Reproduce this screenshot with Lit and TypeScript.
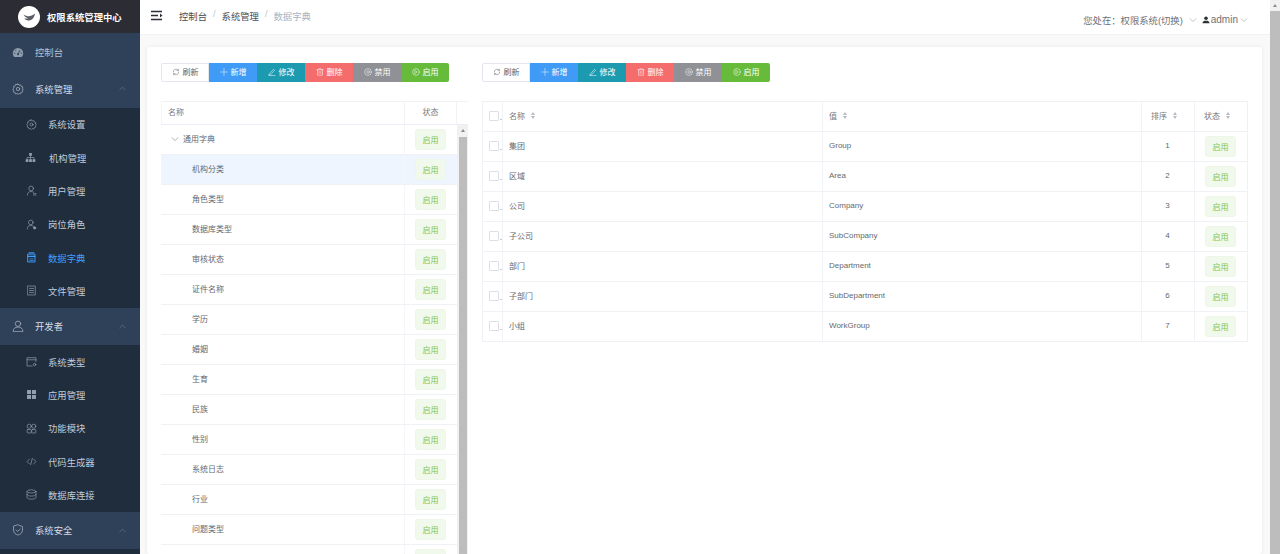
import { LitElement, html, css, svg } from "lit";
import { customElement } from "lit/decorators.js";

const ic = (body: unknown, size = 11) => html`<svg class="ic" width=${size} height=${size} viewBox="0 0 16 16" fill="none" stroke="currentColor" stroke-width="1" stroke-linecap="round" stroke-linejoin="round">${body}</svg>`;

const gear = svg`<circle cx="8" cy="8" r="2.2"/><path d="M8 1.2l1.4 1.7 2.1-.5.7 2.1 2.1.7-.5 2.1L15 8l-1.200 1.600.5 2.100-2.100.7-.7 2.100-2.100-.5L8 15.200l-1.400-1.200-2.100.5-.7-2.100-2.100-.7.5-2.100L1 8l1.600-1.400-.5-2.100 2.100-.7.7-2.100 2.100.5z"/>`;
const icons: Record<string, unknown> = {
  dash: svg`<path d="M3 14.500A7 7 0 1 1 13 14.500z" fill="currentColor" stroke="none"/><path d="M8 10.500l2.500-4.500" stroke="#304156" stroke-width="1.200"/><circle cx="8" cy="11" r="1.300" fill="#304156" stroke="none"/><path d="M2.800 9.500h1.200M12 9.500h1.200M4.500 5.500l.8.8" stroke="#304156"/>`,
  gear,
  org: svg`<g fill="currentColor" stroke="none"><rect x="6" y="1.500" width="4" height="4"/><rect x="1" y="10.500" width="4" height="4"/><rect x="6" y="10.500" width="4" height="4"/><rect x="11" y="10.500" width="4" height="4"/></g><path d="M8 5.500v5M3 10.500V8h10v2.500"/>`,
  user: svg`<circle cx="7.500" cy="5" r="3.400"/><path d="M2 14.500c0-3.400 2.400-5 5.500-5 1.400 0 2.400.3 3.400 1"/><path d="M11 12.500h3.500M11 14.500h3.500"/>`,
  role: svg`<circle cx="7" cy="5" r="3.400"/><path d="M1.800 14.500c0-3.200 2.200-5 5.200-5s4.200 1 5 3"/><circle cx="12.500" cy="13" r="1.600" fill="currentColor"/>`,
  dict: svg`<rect x="3" y="3" width="10" height="11.500" stroke-width="1.400"/><path d="M4.500 1.200h7" stroke-width="1.400"/><path d="M3 6.500h10" stroke-width="1.800"/><path d="M5.500 10h5M5.500 12.300h5"/>`,
  file: svg`<rect x="2.500" y="1.500" width="11" height="13"/><path d="M5 5h6M5 8h6M5 11h6"/>`,
  dev: svg`<circle cx="8" cy="5" r="3.600"/><path d="M1.500 15c0-3.600 2.600-5.600 6.500-5.600s6.500 2 6.500 5.600z"/>`,
  sys: svg`<path d="M14.500 8V2.500h-13v12H9M1.500 5.500h13"/><circle cx="12.500" cy="12.500" r="1.800"/>`,
  app: svg`<g fill="currentColor" stroke="none"><rect x="1.500" y="1.500" width="5.800" height="5.800"/><rect x="8.700" y="1.500" width="5.800" height="5.800"/><rect x="1.500" y="8.700" width="5.800" height="5.800"/><rect x="8.700" y="8.700" width="5.800" height="5.800"/></g>`,
  mod: svg`<circle cx="4.700" cy="4.700" r="3"/><circle cx="11.300" cy="4.700" r="3"/><rect x="1.700" y="9.500" width="6" height="5" rx="1"/><rect x="8.300" y="9.500" width="6" height="5" rx="1"/>`,
  code: svg`<path d="M5 4.500L1.500 8 5 11.500M11 4.500L14.500 8 11 11.500M9.200 3.500L6.800 12.500"/>`,
  db: svg`<ellipse cx="8" cy="3.500" rx="6.500" ry="2.300"/><path d="M1.500 3.500v9c0 1.300 2.900 2.300 6.500 2.300s6.500-1 6.500-2.300v-9M1.500 8c0 1.300 2.900 2.300 6.500 2.300s6.500-1 6.500-2.300"/>`,
  shield: svg`<path d="M8 1.200l6 2.200v4.800c0 3.400-2.600 5.600-6 6.600-3.400-1-6-3.200-6-6.600V3.400z"/><path d="M5.300 7.800L7.500 10l3.400-3.400"/>`,
  refresh: svg`<path d="M13.500 8A5.500 5.500 0 0 1 3.600 11.300M2.500 8a5.500 5.500 0 0 1 9.900-3.300"/><path d="M12.800 2.200v2.600h-2.600M3.200 13.800v-2.600h2.600"/>`,
  plus: svg`<path d="M8 1v14M1 8h14"/>`,
  edit: svg`<path d="M3 11.500L11 2.500l2.200 2-8 8.800-3 .7zM2 15h12"/>`,
  trash: svg`<path d="M1.500 3.500h13M5.500 3.500v-2h5v2M3 3.500v11h10v-11M6.300 6.500v5M9.700 6.500v5"/>`,
  ban: svg`<circle cx="8" cy="8" r="6.800"/><circle cx="8" cy="8" r="2.600"/>`,
  play: svg`<circle cx="8" cy="8" r="6.800"/><path d="M6.300 5l4.400 3-4.400 3z"/>`,
  chevUp: svg`<path d="M3 10.500L8 5.500l5 5"/>`,
  chevDown: svg`<path d="M2 5.500L8 11l6-5.500"/>`,
  person: svg`<circle cx="8" cy="4.500" r="3.600" fill="currentColor" stroke="none"/><path d="M1 14.500c0-3.800 3.200-5 7-5s7 1.200 7 5z" fill="currentColor" stroke="none"/>`,
};

const groups = [
  { t: "控制台", i: "dash", dim: true, subs: [] as { t: string; i: string; on?: boolean; wide?: boolean }[], leaf: true },
  { t: "系统管理", i: "gear", dim: false, leaf: false, subs: [
    { t: "系统设置", i: "gear" }, { t: "机构管理", i: "org", wide: true }, { t: "用户管理", i: "user" },
    { t: "岗位角色", i: "role" }, { t: "数据字典", i: "dict", on: true }, { t: "文件管理", i: "file" } ] },
  { t: "开发者", i: "dev", dim: false, leaf: false, subs: [
    { t: "系统类型", i: "sys" }, { t: "应用管理", i: "app" }, { t: "功能模块", i: "mod" },
    { t: "代码生成器", i: "code" }, { t: "数据库连接", i: "db" } ] },
  { t: "系统安全", i: "shield", dim: false, leaf: false, subs: [] },
];

const tools = [
  { t: "刷新", i: "refresh", c: "plain" }, { t: "新增", i: "plus", c: "blue" }, { t: "修改", i: "edit", c: "teal" },
  { t: "删除", i: "trash", c: "red" }, { t: "禁用", i: "ban", c: "gray" }, { t: "启用", i: "play", c: "green" },
];

const tree = ["机构分类", "角色类型", "数据库类型", "审核状态", "证件名称", "学历", "婚姻", "生育", "民族", "性别", "系统日志", "行业", "问题类型", ""];
const items = [["集团", "Group"], ["区域", "Area"], ["公司", "Company"], ["子公司", "SubCompany"], ["部门", "Department"], ["子部门", "SubDepartment"], ["小组", "WorkGroup"]];

@customElement("app-root")
export class AppRoot extends LitElement {
  static styles = css`
    :host { display: flex; width: 1280px; height: 554px; overflow: hidden; background: #fff; color: #606266;
      font-family: "Liberation Sans", "Noto Sans CJK SC", sans-serif; font-size: 8px; }
    * { box-sizing: border-box; }
    .ic { flex: none; display: block; }

    aside { width: 140px; flex: none; background: #1f2d3d; color: #bfcbd9; font-size: 9.33px; overflow: hidden; }
    aside .ic { opacity: .72; }
    .logo { height: 33px; background: #2b2c34; display: flex; align-items: center; gap: 7px; padding-left: 18px; color: #fff; font-weight: 700; }
    .logo svg { flex: none; }
    .group { height: 37.33px; background: #2f4159; display: flex; align-items: center; padding: 0 13px 0 12px; gap: 11px; color: #d5dde6; }
    .group.dim { color: #b4c0cd; }
    .group .arrow { margin-left: auto; opacity: .55; }
    .sub { height: 33.33px; display: flex; align-items: center; padding-left: 26px; gap: 11px; }
    .sub.wide { padding-left: 25px; gap: 13px; }
    .sub.on { color: #409eff; }
    .sub.on .ic { opacity: 1; }

    main { flex: 1; min-width: 0; display: flex; flex-direction: column; }
    header { height: 35px; flex: none; display: flex; align-items: center; padding: 0 22px 3px 11px; border-bottom: 1px solid #f2f2f2; font-size: 9.33px; }
    .burger { color: #2b2f3a; margin-right: 16px; }
    .crumb { color: #4a4d52; display: flex; gap: 6px; }
    .crumb .sep { color: #c0c4cc; }
    .crumb .last { color: #a6b4c6; }
    .right { margin-left: auto; padding-top: 8px; display: flex; align-items: center; color: #6f7276; }
    .right .chev { margin: 0 5px 0 6px; color: #8a8d92; }
    .right .chev.end { margin: 0 0 0 2px; }
    .right .who { color: #303133; margin-right: 1px; }
    .right .name { font-size: 10px; }

    .page { flex: 1; min-height: 0; background: #f9f9f9; padding: 12px 8px 0 7px; }
    .card { height: 100%; background: #fff; border-radius: 3px; box-shadow: 0 0 4px rgba(0,0,0,.07); padding: 16px 14px 0;
      display: grid; grid-template-columns: 307px 766px; gap: 14px; overflow: hidden; }
    .panel { min-width: 0; }
    .toolbar { display: flex; height: 19px; margin-bottom: 19px; }
    .btn { width: 48px; height: 19px; padding-bottom: 2px; display: flex; align-items: center; justify-content: center; gap: 3px; color: #fff; }
    .btn:first-child { border-radius: 2px 0 0 2px; }
    .btn:last-child { border-radius: 0 2px 2px 0; }
    .plain { background: #fff; color: #606266; border: 1px solid #e4e7ed; }
    .blue { background: #3f9bf5; }
    .teal { background: #1c9bb0; }
    .red { background: #f56c6c; }
    .gray { background: #8f9196; }
    .green { background: #67bb3a; }

    .tag { width: 31px; height: 21px; display: flex; align-items: center; justify-content: center; background: #f0f9eb;
      border: 1px solid #eef7e7; border-radius: 3px; color: #7fc65a; }

    .ltable { border-top: 1px solid #f0f2f6; height: 100%; }
    .lhead { display: grid; grid-template-columns: 242px 53px 11px; height: 23px; border-bottom: 1px solid #ebeef5; border-left: 1px solid #f4f5f8; }
    .lhead > div { display: flex; align-items: center; padding-bottom: 3px; }
    .lhead .name { padding-left: 6px; color: #77797e; }
    .lhead .st { justify-content: center; border-left: 1px solid #f0f2f6; border-right: 1px solid #f0f2f6; color: #77797e; }
    .lbody { display: flex; height: 440px; overflow: hidden; }
    .lrows { width: 296px; flex: none; }
    .lrow { display: grid; grid-template-columns: 243px 53px; height: 30px; border-bottom: 1px solid #eff1f5; }
    .lrow.sel { background: #eef5fe; }
    .lrow .n { display: flex; align-items: center; padding: 0 0 2px 31px; color: #66686d; }
    .lrow .n.root { padding-left: 10px; gap: 4px; }
    .lrow .s { display: flex; align-items: center; justify-content: center; padding-right: 1px; border-left: 1px solid #f5f6f9; }
    .sb { width: 11px; flex: none; background: #f1f1f1; display: flex; flex-direction: column; align-items: center; }
    .sb .up { width: 0; height: 0; margin-top: 4px; border: 2.5px solid transparent; border-top: 0; border-bottom: 3px solid #8b8b8b; }
    .sb .thumb { width: 8px; flex: 1; margin-top: 5px; background: #bdbdbd; }

    .rtable { border: 1px solid #eff1f5; border-bottom: 0; }
    .rrow { display: grid; grid-template-columns: 19px 320px 319px 53px 53px; height: 30px; border-bottom: 1px solid #eff1f5; }
    .rrow > div { display: flex; align-items: center; border-left: 1px solid #f2f3f7; padding: 0 0 2px 6px; color: #66686d; }
    .rrow > div:first-child { border-left: 0; }
    .rrow .ctr { justify-content: center; padding: 0 1px 2px 0; }
    .rrow .ctr.tagcell { padding-bottom: 0; }
    .rrow .pad { padding-left: 9px; }
    .rrow.th > div { color: #77797e; }
    .chk { position: relative; width: 10px; height: 10px; border: 1px solid #dcdfe6; border-radius: 1px; background: #fff; }
    .chk::after { content: ""; position: absolute; left: 10px; top: 7px; width: 2px; height: 1px; background: #c8cad0; }
    .carets { display: inline-flex; flex-direction: column; gap: 1px; margin-left: 6px; }
    .carets i { display: block; width: 0; height: 0; border: 2.5px solid transparent; }
    .carets i:first-child { border-top: 0; border-bottom: 3px solid #b8bbc2; }
    .carets i:last-child { border-bottom: 0; border-top: 3px solid #b8bbc2; }

    .psb { width: 10px; flex: none; background: #f1f1f1; display: flex; flex-direction: column; align-items: center; }
    .psb .up { width: 0; height: 0; margin-top: 4px; border: 2.5px solid transparent; border-top: 0; border-bottom: 3px solid #8b8b8b; }
    .psb .thumb { width: 10px; flex: 1; margin-top: 4px; background: #bdbdbd; }
  `;

  private toolbar() {
    return html`<div class="toolbar">${tools.map(b => html`<div class="btn ${b.c}">${ic(icons[b.i], 8)}<span>${b.t}</span></div>`)}</div>`;
  }

  private carets(label: string, pad = false) {
    return html`<div class=${pad ? "pad" : ""}>${label}<span class="carets"><i></i><i></i></span></div>`;
  }

  render() {
    return html`
      <aside>
        <div class="logo">
          <svg width="22" height="22" viewBox="0 0 22 22"><circle cx="11" cy="11" r="11" fill="#fff"/><path d="M5 8.500c2.500 1 4 1.800 5.500 1.800 2.500 0 4-1 6.500-2.800-.5 3.500-2.300 6.500-6 7-2.300.3-3.800-.8-4.700-2.200 1.400.4 2.700.4 3.700 0-2.300-.8-3.700-2-4.500-3.800z" fill="#5a5f66"/></svg>
          <span>权限系统管理中心</span>
        </div>
        ${groups.map(g => html`
          <div class="group ${g.dim ? "dim" : ""}">${ic(icons[g.i], 12)}<span>${g.t}</span>${g.leaf ? "" : html`<span class="arrow">${ic(icons.chevUp, 9)}</span>`}</div>
          ${g.subs.map(s => html`<div class="sub ${s.on ? "on" : ""} ${s.wide ? "wide" : ""}">${ic(icons[s.i], 11)}<span>${s.t}</span></div>`)}
        `)}
      </aside>
      <main>
        <header>
          <svg class="ic burger" width="12" height="11" viewBox="0 0 12 11" fill="none" stroke="currentColor" stroke-width="1.300"><path d="M0 1.500h11M0 5.500h7M0 9.500h11"/><path d="M9 3.500l2.500 2-2.500 2z" fill="currentColor" stroke="none"/></svg>
          <div class="crumb"><span>控制台</span><span class="sep">/</span><span>系统管理</span><span class="sep">/</span><span class="last">数据字典</span></div>
          <div class="right">
            <span>您处在：权限系统(切换)</span><span class="chev">${ic(icons.chevDown, 8)}</span>
            <span class="who">${ic(icons.person, 8)}</span><span class="name">admin</span><span class="chev end">${ic(icons.chevDown, 8)}</span>
          </div>
        </header>
        <div class="page">
          <div class="card">
            <section class="panel">
              ${this.toolbar()}
              <div class="ltable">
                <div class="lhead"><div class="name">名称</div><div class="st">状态</div><div></div></div>
                <div class="lbody">
                  <div class="lrows">
                    <div class="lrow"><div class="n root">${ic(icons.chevDown, 8)}<span>通用字典</span></div><div class="s"><div class="tag">启用</div></div></div>
                    ${tree.map((t, i) => html`<div class="lrow ${i === 0 ? "sel" : ""}"><div class="n">${t}</div><div class="s"><div class="tag">${t ? "启用" : ""}</div></div></div>`)}
                  </div>
                  <div class="sb"><div class="up"></div><div class="thumb"></div></div>
                </div>
              </div>
            </section>
            <section class="panel">
              ${this.toolbar()}
              <div class="rtable">
                <div class="rrow th">
                  <div><span class="chk"></span></div>
                  ${this.carets("名称")}${this.carets("值")}${this.carets("排序", true)}${this.carets("状态", true)}
                </div>
                ${items.map((r, i) => html`<div class="rrow">
                  <div><span class="chk"></span></div><div>${r[0]}</div><div>${r[1]}</div>
                  <div class="ctr">${i + 1}</div><div class="ctr tagcell"><div class="tag">启用</div></div>
                </div>`)}
              </div>
            </section>
          </div>
        </div>
      </main>
      <div class="psb"><div class="up"></div><div class="thumb"></div></div>
    `;
  }
}
